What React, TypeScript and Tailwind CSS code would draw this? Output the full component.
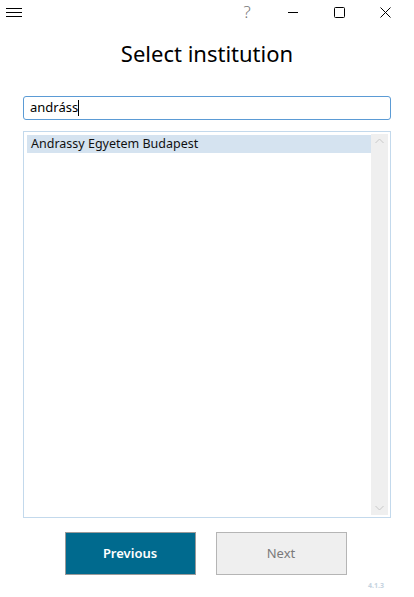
import React from 'react';

const font = { fontFamily: '"Noto Sans", "Open Sans", sans-serif' };

export default function App() {
  return (
    <div className="w-[414px] h-[597px] bg-white flex flex-col relative" style={font}>
      {/* title bar */}
      <div className="h-[24px] flex items-center">
        <div className="ml-[6px] flex flex-col gap-[3px] w-[16px]">
          <div className="h-px bg-black" />
          <div className="h-px bg-black" />
          <div className="h-px bg-black" />
        </div>
        <div className="ml-auto mr-[6px] flex items-center">
          <span className="w-[46px] flex justify-center text-[17px] font-light text-[#777] leading-none -mt-[2px]">?</span>
          <span className="w-[46px] flex justify-center">
            <svg width="10" height="10" viewBox="0 0 10 10"><path d="M0 5.5h10" stroke="#000" strokeWidth="1" /></svg>
          </span>
          <span className="w-[46px] flex justify-center">
            <svg width="11" height="11" viewBox="0 0 11 11"><rect x="0.5" y="0.5" width="10" height="10" rx="1" fill="none" stroke="#000" strokeWidth="1" /></svg>
          </span>
          <span className="w-[46px] flex justify-center">
            <svg width="11" height="11" viewBox="0 0 11 11"><path d="M0.5 0.5l10 10M10.5 0.5l-10 10" stroke="#000" strokeWidth="1" /></svg>
          </span>
        </div>
      </div>

      <h1 className="mt-[15px] text-center text-[22px] leading-[28px] text-black">Select institution</h1>

      <div className="mx-[23px] mt-[29px] h-[24px] border border-[#5b9bd5] rounded-[3px] flex items-center px-[6px] text-[13px] text-black">
        andráss<span className="w-px h-[16px] bg-black" />
      </div>

      <div className="mx-[23px] mt-[11px] h-[387px] border border-[#c3d9ec] flex p-[2px]">
        <div className="flex-1 pl-px pt-px">
          <div className="h-[18px] bg-[#d5e3f0] flex items-center px-[4px] text-[12.5px] text-[#111]">Andrassy Egyetem Budapest</div>
        </div>
        <div className="w-[17px] bg-[#efefef] flex flex-col justify-between items-center py-[4px]">
          <svg width="9" height="6" viewBox="0 0 9 6"><path d="M0.5 5l4-4 4 4" fill="none" stroke="#c8c8c8" /></svg>
          <svg width="9" height="6" viewBox="0 0 9 6"><path d="M0.5 1l4 4 4-4" fill="none" stroke="#c8c8c8" /></svg>
        </div>
      </div>

      <div className="mt-[14px] flex justify-center gap-[20px] pr-[3px]">
        <button className="w-[131px] h-[43px] bg-[#006a8e] border border-[#9a9a9a] text-white text-[13px] font-semibold">Previous</button>
        <button className="w-[131px] h-[43px] bg-[#efefef] border border-[#b5b5b5] text-[#7a7a7a] text-[13px]">Next</button>
      </div>

      <div className="flex justify-end pr-[30px] mt-[6px] text-[7px] font-bold text-[#c5d3e0]">4.1.3</div>
    </div>
  );
}
